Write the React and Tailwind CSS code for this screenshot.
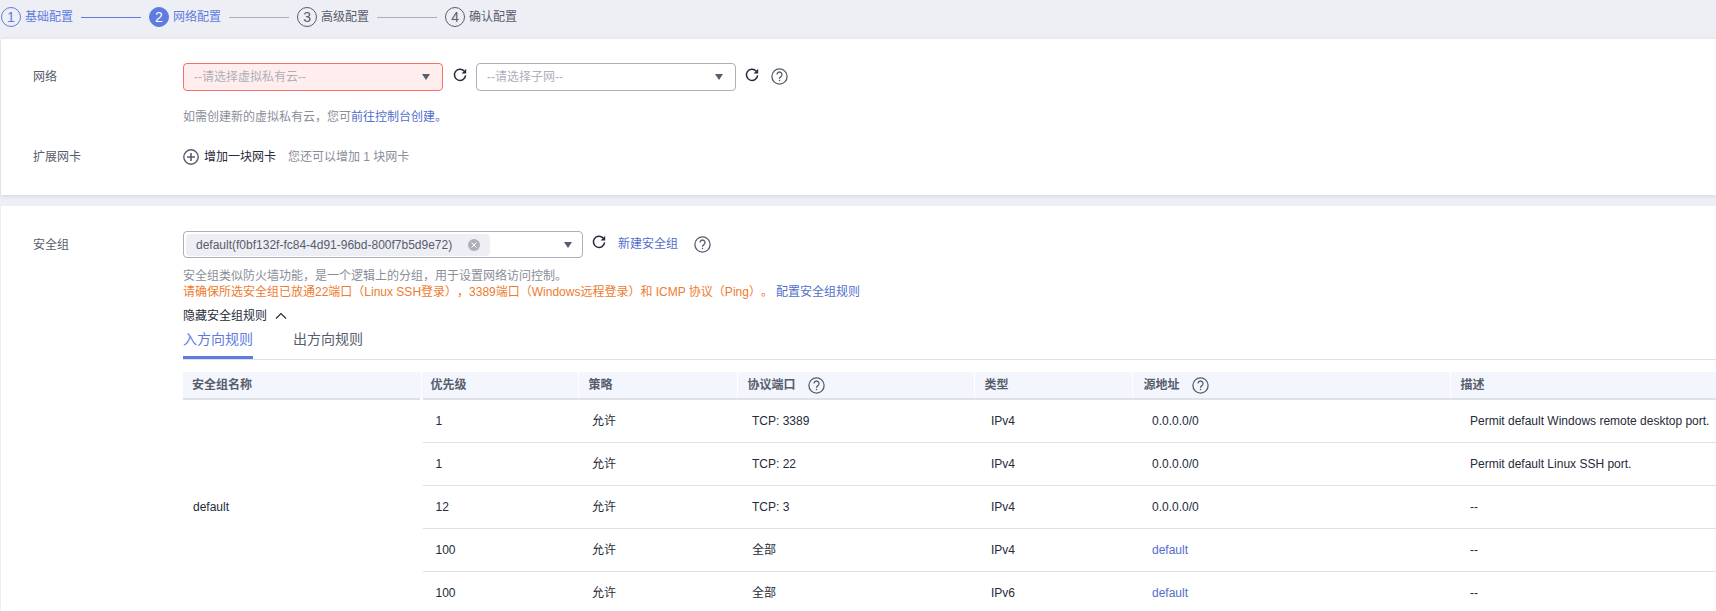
import React from "react";

const FONT = '"Liberation Sans", "Noto Sans CJK SC", sans-serif';

function Refresh({ className = "" }) {
  return (
    <svg viewBox="0 0 14 14" className={`w-3.5 h-3.5 shrink-0 ${className}`} fill="none">
      <path d="M11.2 3.1A5.6 5.6 0 1 0 12.6 7.4" stroke="#252b3a" strokeWidth="1.5" />
      <path d="M13.2 0.8v4.6H8.6z" fill="#252b3a" />
    </svg>
  );
}

function Help({ className = "" }) {
  return (
    <svg viewBox="0 0 17 17" className={`w-[17px] h-[17px] shrink-0 ${className}`} fill="none" stroke="#575d6c" strokeWidth="1.3">
      <circle cx="8.5" cy="8.5" r="7.6" />
      <path d="M6 6.6a2.5 2.5 0 1 1 3.9 2c-.9.6-1.4 1.1-1.4 2.2" />
      <path d="M8.5 11.8v1.4" />
    </svg>
  );
}

function Caret() {
  return (
    <svg viewBox="0 0 8 6" className="w-2 h-1.5 shrink-0">
      <path d="M0 0h8L4 6z" fill="#575d6c" />
    </svg>
  );
}

function Step({ n, label, state, line }) {
  const circle =
    state === "active"
      ? "bg-[#5e7ce0] border-[#5e7ce0] text-white"
      : state === "done"
      ? "border-[#5e7ce0] text-[#5e7ce0]"
      : "border-[#575d6c] text-[#575d6c]";
  const text = state === "todo" ? "text-[#575d6c]" : "text-[#5e7ce0]";
  return (
    <div className="flex items-center">
      <span className={`w-5 h-5 rounded-full border flex items-center justify-center text-sm leading-none ${circle}`}>{n}</span>
      <span className={`ml-1 text-xs ${text}`}>{label}</span>
      {line && <span className={`ml-2 mr-2 w-[60px] h-px ${state === "done" ? "bg-[#5e7ce0]" : "bg-[#adb0b8]"}`} />}
    </div>
  );
}

const rows = [
  ["1", "允许", "TCP: 3389", "IPv4", "0.0.0.0/0", "Permit default Windows remote desktop port."],
  ["1", "允许", "TCP: 22", "IPv4", "0.0.0.0/0", "Permit default Linux SSH port."],
  ["12", "允许", "TCP: 3", "IPv4", "0.0.0.0/0", "--"],
  ["100", "允许", "全部", "IPv4", "default", "--"],
  ["100", "允许", "全部", "IPv6", "default", "--"],
];

const cellPad = ["pl-[13px]", "pl-[14px]", "pl-[15px]", "pl-[17px]", "pl-5", "pl-5"];

export default function App() {
  return (
    <div className="h-[611px] w-[1716px] overflow-hidden bg-[#eeeff5] text-xs text-[#252b3a] [text-spacing-trim:space-all]" style={{ fontFamily: FONT }}>
      <div className="h-[39px] pl-px flex items-center pb-[5px]">
        <Step n="1" label="基础配置" state="done" line />
        <Step n="2" label="网络配置" state="active" line />
        <Step n="3" label="高级配置" state="todo" line />
        <Step n="4" label="确认配置" state="todo" />
      </div>

      <section className="ml-px h-[156px] bg-white shadow-[0_1px_4px_rgba(0,0,0,0.12)] pl-8 pt-6">
        <div className="flex">
          <div className="w-[150px] h-7 leading-7 text-[#575d6c]">网络</div>
          <div>
            <div className="flex items-start">
              <div className="w-[260px] h-7 rounded-sm border border-[#f66f6a] bg-[#ffeeed] flex items-center justify-between pl-2.5 pr-3 text-[#adb0b8]">
                <span>--请选择虚拟私有云--</span>
                <Caret />
              </div>
              <Refresh className="ml-[10px] mt-[5px]" />
              <div className="ml-[9px] w-[260px] h-7 rounded-sm border border-[#adb0b8] bg-white flex items-center justify-between pl-2.5 pr-3 text-[#adb0b8]">
                <span>--请选择子网--</span>
                <Caret />
              </div>
              <Refresh className="ml-[9px] mt-[5px]" />
              <Help className="ml-3 mt-[5px]" />
            </div>
            <div className="mt-[18px] leading-4 text-[#8a8e99]">
              如需创建新的虚拟私有云，您可<span className="text-[#526ecc]">前往控制台创建。</span>
            </div>
          </div>
        </div>
        <div className="flex mt-6 items-center h-4">
          <div className="w-[150px] text-[#575d6c]">扩展网卡</div>
          <div className="flex items-center">
            <svg viewBox="0 0 16 16" className="w-4 h-4" fill="none" stroke="#575d6c" strokeWidth="1.4">
              <circle cx="8" cy="8" r="7.2" />
              <path d="M8 4v8M4 8h8" strokeWidth="1.6" />
            </svg>
            <span className="ml-[5px]">增加一块网卡</span>
            <span className="ml-3 text-[#8a8e99]">您还可以增加 1 块网卡</span>
          </div>
        </div>
      </section>

      <section className="ml-px mt-[11px] h-[420px] bg-white pl-8 pt-[25px] overflow-hidden">
        <div className="flex">
          <div className="w-[150px] h-[27px] leading-[29px] text-[#575d6c] shrink-0">安全组</div>
          <div className="flex-1 min-w-0">
            <div className="flex items-start">
              <div className="w-[400px] h-[27px] rounded-sm border border-[#adb0b8] flex items-center justify-between pl-[2px] pr-2.5">
                <span className="w-[304px] h-[22px] rounded-sm bg-[#eeeff5] flex items-center pl-2.5 text-[#575d6c]">
                  <span className="whitespace-nowrap">default(f0bf132f-fc84-4d91-96bd-800f7b5d9e72)</span>
                  <span className="ml-[16px] w-3 h-3 rounded-full bg-[#adb0b8] flex items-center justify-center">
                    <svg viewBox="0 0 8 8" className="w-2 h-2" stroke="white" strokeWidth="1">
                      <path d="M1.5 1.5l5 5M6.5 1.5l-5 5" />
                    </svg>
                  </span>
                </span>
                <Caret />
              </div>
              <Refresh className="ml-[9px] mt-[4px]" />
              <span className="ml-3 leading-[27px] text-[#526ecc]">新建安全组</span>
              <Help className="ml-4 mt-[5px]" />
            </div>
            <div className="mt-[10px] leading-4 text-[#8a8e99]">安全组类似防火墙功能，是一个逻辑上的分组，用于设置网络访问控制。</div>
            <div className="leading-4 text-[#ed7b2f] whitespace-nowrap">
              请确保所选安全组已放通22端口（Linux SSH登录），3389端口（Windows远程登录）和 ICMP 协议（Ping）。
              <span className="ml-[3px] text-[#526ecc]">配置安全组规则</span>
            </div>
            <div className="mt-2 h-4 flex items-center">
              <span>隐藏安全组规则</span>
              <svg viewBox="0 0 12 8" className="ml-2 w-3 h-2" fill="none" stroke="#252b3a" strokeWidth="1.2">
                <path d="M1 6.5L6 1.5l5 5" />
              </svg>
            </div>
            <div className="h-9 border-b border-[#dfe1e6] flex text-sm">
              <div className="w-[70px] h-[35px] border-b-[3px] border-[#5e7ce0] text-[#5e7ce0] leading-[30px] whitespace-nowrap">入方向规则</div>
              <div className="ml-10 w-[70px] leading-[30px] text-[#575d6c] whitespace-nowrap">出方向规则</div>
            </div>
            <table className="mt-3 table-fixed border-collapse w-[1533px]">
              <colgroup>
                <col className="w-[238px]" />
                <col className="w-[157px]" />
                <col className="w-[159px]" />
                <col className="w-[237px]" />
                <col className="w-[158px]" />
                <col className="w-[318px]" />
                <col />
              </colgroup>
              <thead>
                <tr className="h-[27px] bg-[#f3f6fc] text-[#575d6c]">
                  <th className="pl-[9px] text-left font-bold border-b-2 border-[#dfe1e6] border-r border-r-white">安全组名称</th>
                  <th className="pl-[9px] text-left font-bold border-b-2 border-[#dfe1e6] border-r border-r-white">优先级</th>
                  <th className="pl-[10px] text-left font-bold border-b-2 border-[#dfe1e6] border-r border-r-white">策略</th>
                  <th className="pl-[10px] text-left font-bold border-b-2 border-[#dfe1e6] border-r border-r-white">
                    <span className="flex items-center gap-3">协议端口<Help /></span>
                  </th>
                  <th className="pl-[10px] text-left font-bold border-b-2 border-[#dfe1e6] border-r border-r-white">类型</th>
                  <th className="pl-[11px] text-left font-bold border-b-2 border-[#dfe1e6] border-r border-r-white">
                    <span className="flex items-center gap-3">源地址<Help /></span>
                  </th>
                  <th className="pl-[10px] text-left font-bold border-b-2 border-[#dfe1e6]">描述</th>
                </tr>
              </thead>
              <tbody>
                {rows.map((r, i) => (
                  <tr key={i} className="h-[43px]">
                    {i === 0 && (
                      <td rowSpan={5} className="pl-[10px] align-middle border-r-[3px] border-r-white">default</td>
                    )}
                    {r.map((c, j) => (
                      <td key={j} className={`border-b border-[#dfe1e6] ${cellPad[j]} ${c === "default" ? "text-[#526ecc]" : ""} whitespace-nowrap`}>
                        {c}
                      </td>
                    ))}
                  </tr>
                ))}
              </tbody>
            </table>
          </div>
        </div>
      </section>
    </div>
  );
}
